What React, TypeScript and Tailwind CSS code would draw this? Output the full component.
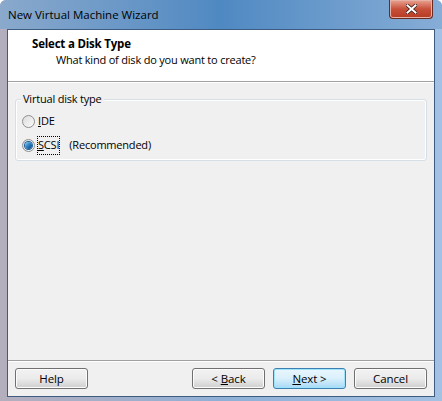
import React from 'react';

const Radio: React.FC<{ checked?: boolean }> = ({ checked }) => (
  <span className="relative flex h-[13px] w-[13px] items-center justify-center rounded-full border border-[#8e8f8f] bg-gradient-to-br from-[#dcdcdc] to-[#fbfbfb]">
    {checked && (
      <span className="h-[7px] w-[7px] rounded-full bg-gradient-to-br from-[#8fd1f4] via-[#2a7fc0] to-[#0e3e70] shadow-[0_0_0_1px_#1b5d9c]" />
    )}
  </span>
);

const Button: React.FC<{ children: React.ReactNode; primary?: boolean }> = ({ children, primary }) => (
  <button
    className={`flex h-[21px] w-[73px] items-center justify-center rounded-[3px] border text-[11.5px] tracking-[-0.1px] text-black ${
      primary
        ? 'border-[#3c7fb1] bg-gradient-to-b from-[#eaf6fd] via-[#d9f0fc] to-[#a7d9f5] shadow-[inset_0_0_0_1px_#9ee3fb]'
        : 'border-[#707070] bg-gradient-to-b from-[#f2f2f2] via-[#ebebeb] to-[#cfcfcf] shadow-[inset_0_0_0_1px_#fcfcfc]'
    }`}
  >
    {children}
  </button>
);

export default function App() {
  return (
    <div
      className="flex h-[401px] w-[442px] flex-col overflow-hidden rounded-t-[6px] bg-gradient-to-r from-[#b4aebd] via-[#8fb0d6] to-[#a3c1e2]"
      style={{ fontFamily: '"Open Sans", "Noto Sans", sans-serif' }}
    >
      {/* title bar */}
      <div className="relative flex h-[29px] shrink-0 items-center bg-gradient-to-r from-[#8aa9cc] via-[#4f89c2] to-[#86add6] pl-[8px]">
        <span className="text-[11.5px] text-black">New Virtual Machine Wizard</span>
        <div className="absolute right-[9px] top-0 flex h-[19px] w-[44px] items-center justify-center rounded-b-[4px] border border-t-0 border-[#6a2b22] bg-gradient-to-b from-[#e8a393] via-[#c7503a] to-[#b63a22] shadow-[inset_0_0_0_1px_#e7b2a5]">
          <svg width="11" height="10" viewBox="0 0 11 10">
            <path d="M1.5 1.5 L9.5 8.5 M9.5 1.5 L1.5 8.5" stroke="#3a1a14" strokeWidth="3.6" strokeLinecap="square" />
            <path d="M1.5 1.5 L9.5 8.5 M9.5 1.5 L1.5 8.5" stroke="#ffffff" strokeWidth="2" strokeLinecap="square" />
          </svg>
        </div>
      </div>

      {/* client area */}
      <div className="mx-[7px] flex h-[368px] shrink-0 flex-col border border-[#3e5c7f] bg-[#f0f0f0] text-[11px] tracking-[-0.2px]">
        <div className="flex h-[52px] shrink-0 flex-col border-b border-[#a0a0a0] bg-white pl-[24px] pt-[6px]">
          <span className="text-[11.5px] font-bold leading-[16px] text-black">Select a Disk Type</span>
          <span className="pl-[24px] leading-[16px] text-black">What kind of disk do you want to create?</span>
        </div>
        <div className="h-px shrink-0 bg-white" />

        <div className="mx-[7px] mt-[16px] h-[62px] shrink-0 rounded-[3px] border border-[#d5dfe5] shadow-[inset_0_0_0_1px_#ffffff]">
          <div className="-mt-[9px] ml-[5px] w-fit bg-[#f0f0f0] px-[2px] leading-[16px] text-black">
            Virtual disk type
          </div>
          <div className="mt-[7px] flex flex-col gap-[9px] pl-[6px]">
            <label className="flex h-[15px] items-center gap-[3px] text-black">
              <Radio />
              <span>
                <span className="underline">I</span>DE
              </span>
            </label>
            <label className="flex h-[15px] items-center gap-[3px] text-black">
              <Radio checked />
              <span className="outline outline-1 outline-dotted outline-black">
                <span className="underline">S</span>CSI
              </span>
              <span className="ml-[7px]">(Recommended)</span>
            </label>
          </div>
        </div>

        <div className="flex-1" />
        <div className="h-px shrink-0 bg-[#a0a0a0]" />
        <div className="h-px shrink-0 bg-white" />
        <div className="flex h-[34px] shrink-0 items-start pt-[6px] pl-[7px] pr-[7px]">
          <Button>Help</Button>
          <div className="flex-1" />
          <div className="flex gap-[8px]">
            <Button>
              &lt;&nbsp;<span className="underline">B</span>ack
            </Button>
            <Button primary>
              <span className="underline">N</span>ext&nbsp;&gt;
            </Button>
            <Button>Cancel</Button>
          </div>
        </div>
      </div>
    </div>
  );
}
